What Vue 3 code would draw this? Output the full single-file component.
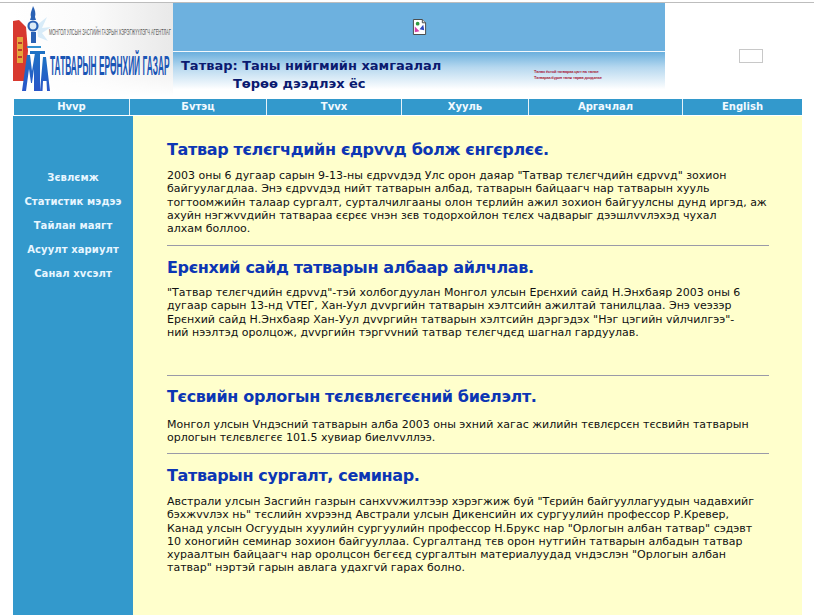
<template>
  <div class="page">
    <header class="top">
      <div class="logo">
        <svg width="160" height="93" viewBox="0 0 160 93">
          <defs>
            <linearGradient id="logoBg" x1="0" y1="0" x2="1" y2="0">
              <stop offset="0" stop-color="#ffffff" />
              <stop offset="0.5" stop-color="#fafafa" />
              <stop offset="1" stop-color="#e9e9e9" />
            </linearGradient>
            <linearGradient id="logoFade" x1="0" y1="0" x2="0" y2="1">
              <stop offset="0" stop-color="#ffffff" stop-opacity="0" />
              <stop offset="1" stop-color="#ffffff" />
            </linearGradient>
            <linearGradient id="mono" x1="0" y1="0" x2="0" y2="1">
              <stop offset="0" stop-color="#1d72c4" />
              <stop offset="1" stop-color="#2a55c8" />
            </linearGradient>
          </defs>
          <rect width="160" height="93" fill="url(#logoBg)" />
          <rect y="55" width="160" height="38" fill="url(#logoFade)" />
          <!-- flag -->
          <path d="M0 18 L6 17 L13 24 L15 48 L12 78 L0 78Z" fill="#d8392f" />
          <path d="M4 34 H10 V60 H4Z" fill="#e6a53c" />
          <path d="M5 40 H9 M5 47 H9 M5 54 H9" stroke="#c0392b" stroke-width="2" />
          <!-- rays -->
          <path d="M24 22 L34 14 L29 25 L38 24 L29 30 L35 38 L25 34Z" fill="#d8ebf8" />
          <!-- soyombo -->
          <path d="M20 3 C22 7 23 10 22 14 L23 17 L17 17 L18 14 C17 10 19 7 20 3Z" fill="#2a62b5" />
          <circle cx="20" cy="23" r="4.5" fill="#dcebf7" stroke="#2a62b5" stroke-width="2.2" />
          <path d="M18 29 H23 V40 H18Z" fill="#2a62b5" />
          <path d="M14 43 H28 V45 H14Z" fill="#2f8fd0" />
          <!-- monogram -->
          <path d="M9 88 L14 52 H17 L19 68 L22 50 H24 V88 H21 V66 L19 80 H18 L16 66 L13 88Z" fill="url(#mono)" />
          <path d="M17 48 H32 V51 H27 V88 H24 V51 H17Z" fill="url(#mono)" />
          <path d="M27 88 L30 54 H33 L37 88 H34 L33.5 78 H30 L29.5 88Z" fill="url(#mono)" />
          <text class="logo-small" transform="translate(36 32) scale(.44 1)">МОНГОЛ УЛСЫН ЗАСГИЙН ГАЗРЫН ХЭРЭГЖҮҮЛЭГЧ АГЕНТЛАГ</text>
          <text class="logo-big" transform="translate(37 72) scale(.298 1)">ТАТВАРЫН ЕРӨНХИЙ ГАЗАР</text>
        </svg>
      </div>
      <div class="banner">
        <div class="banner-top">
          <svg class="broken" width="15" height="16" viewBox="0 0 16 17">
            <path d="M1.5 .5 H11 L14.5 4 V16.5 H1.5Z" fill="#fff" stroke="#444" />
            <path d="M11 .5 V4 H14.5" fill="#ddd" stroke="#444" />
            <circle cx="6" cy="5" r="2" fill="#2c9a3c" />
            <path d="M3 14 L3 8 L8 13Z" fill="#d63fa8" />
            <path d="M8 11 L12 6 L13 12Z" fill="#2c46c0" />
          </svg>
        </div>
        <div class="banner-bottom">
          <div class="slogan">
            <div class="slogan-a">Татвар: Таны нийгмийн хамгаалал</div>
            <div class="slogan-b">Төрөө дээдлэх ёс</div>
          </div>
          <div class="tiny">
            <div>Төлөх ёстой татвараа цагт нь төлье</div>
            <div>Татвараа бүрэн төлж төрөө дээдэлье</div>
          </div>
        </div>
      </div>
      <div class="search"><span class="box"></span></div>
    </header>

    <nav class="menu">
      <a v-for="m in menu" :key="m" class="menu-item">{{ m }}</a>
    </nav>

    <div class="body">
      <aside class="side">
        <a v-for="s in side" :key="s" class="side-item">{{ s }}</a>
      </aside>
      <main class="main">
        <article v-for="(a, i) in articles" :key="a.title" class="article" :class="'a' + i">
          <h2>{{ a.title }}</h2>
          <p>
            <template v-for="l in a.lines" :key="l">{{ l }}<br /></template>
          </p>
        </article>
      </main>
    </div>
  </div>
</template>

<script setup>
const menu = ['Hvvp', 'Бvтэц', 'Tvvx', 'Хууль', 'Аргачлал', 'English']
const side = ['Зєвлємж', 'Статистик мэдээ', 'Тайлан маягт', 'Асуулт хариулт', 'Санал хvсэлт']

const articles = [
  {
    title: 'Татвар тєлєгчдийн єдрvvд болж єнгєрлєє.',
    lines: [
      '2003 оны 6 дугаар сарын 9-13-ны єдрvvдэд Улс орон даяар "Татвар тєлєгчдийн єдрvvд" зохион',
      'байгуулагдлаа. Энэ єдрvvдэд нийт татварын албад, татварын байцаагч нар татварын хууль',
      'тогтоомжийн талаар сургалт, сурталчилгааны олон тєрлийн ажил зохион байгуулсны дунд иргэд, аж',
      'ахуйн нэгжvvдийн татвараа єєрєє vнэн зєв тодорхойлон тєлєх чадварыг дээшлvvлэхэд чухал',
      'алхам боллоо.'
    ]
  },
  {
    title: 'Ерєнхий сайд татварын албаар айлчлав.',
    lines: [
      '"Татвар тєлєгчдийн єдрvvд"-тэй холбогдуулан Монгол улсын Ерєнхий сайд Н.Энхбаяр 2003 оны 6',
      'дугаар сарын 13-нд VТЕГ, Хан-Уул дvvргийн татварын хэлтсийн ажилтай танилцлаа. Энэ vеэзэр',
      'Ерєнхий сайд Н.Энхбаяр Хан-Уул дvvргийн татварын хэлтсийн дэргэдэх "Нэг цэгийн vйлчилгээ"-',
      'ний нээлтэд оролцож, дvvргийн тэргvvний татвар тєлєгчдєд шагнал гардуулав.'
    ]
  },
  {
    title: 'Тєсвийн орлогын тєлєвлєгєєний биелэлт.',
    lines: [
      'Монгол улсын Vндэсний татварын алба 2003 оны эхний хагас жилийн тєвлєрсєн тєсвийн татварын',
      'орлогын тєлєвлєгєє 101.5 хувиар биелvvллээ.'
    ]
  },
  {
    title: 'Татварын сургалт, семинар.',
    lines: [
      'Австрали улсын Засгийн газрын санхvvжилтээр хэрэгжиж буй "Тєрийн байгууллагуудын чадавхийг',
      'бэхжvvлэх нь" тєслийн хvрээнд Австрали улсын Дикенсийн их сургуулийн профессор Р.Кревер,',
      'Канад улсын Осгуудын хуулийн сургуулийн профессор Н.Брукс нар "Орлогын албан татвар" сэдэвт',
      '10 хоногийн семинар зохион байгууллаа. Сургалтанд тєв орон нутгийн татварын албадын татвар',
      'хураалтын байцаагч нар оролцсон бєгєєд сургалтын материалуудад vндэслэн "Орлогын албан',
      'татвар" нэртэй гарын авлага удахгvй гарах болно.'
    ]
  }
]
</script>

<style>
html,
body {
  margin: 0;
  background: #fff;
  overflow: hidden;
}
</style>

<style scoped>
.page {
  width: 814px;
  height: 615px;
  overflow: hidden;
  font-family: 'DejaVu Sans', Verdana, sans-serif;
  box-sizing: border-box;
  padding-top: 2px;
}

.top {
  display: flex;
  height: 93px;
  padding-left: 13px;
  border-top: 1px solid #bdbdbd;
}

.logo {
  width: 160px;
  height: 93px;
}

.logo svg {
  display: block;
}

.logo-small {
  font-family: 'Liberation Sans', sans-serif;
  font-size: 9px;
  fill: #555;
}

.logo-big {
  font-family: 'Liberation Sans', sans-serif;
  font-size: 28px;
  font-weight: bold;
  fill: #1a55b5;
}

.banner {
  width: 492px;
  display: flex;
  flex-direction: column;
}

.banner-top {
  height: 48px;
  background: #6db1df;
  border-bottom: 1px solid #f2f8fc;
  display: flex;
  justify-content: center;
  align-items: center;
}

.banner-bottom {
  height: 44px;
  background: linear-gradient(#6aafdd 0%, #b6d8ef 35%, #ffffff 85%);
  display: flex;
}

.slogan {
  width: 350px;
  padding: 5px 0 0 8px;
  color: #0a1a70;
  font-weight: bold;
  font-size: 13px;
  line-height: 18px;
  box-sizing: border-box;
}

.slogan-b {
  padding-left: 52px;
}

.tiny {
  padding: 17px 0 0 11px;
  font-family: 'Liberation Sans', sans-serif;
  font-size: 4px;
  font-weight: bold;
  letter-spacing: -0.2px;
  line-height: 6px;
  color: #a81a38;
}

.search {
  flex: 1;
  position: relative;
}

.box {
  position: absolute;
  left: 74px;
  top: 46px;
  width: 22px;
  height: 12px;
  border: 1px solid #c8c8c8;
}

.menu {
  display: grid;
  grid-template-columns: 115px 137px 135px 127px 154px 120px;
  margin: 3px 0 1px 14px;
  width: 788px;
  background: #3399cc;
  height: 16px;
}

.menu-item {
  color: #f2faff;
  font-size: 10px;
  font-weight: bold;
  line-height: 16px;
  text-align: center;
  border-left: 1px solid #e6f2f8;
}

.menu-item:first-child {
  border-left: 0;
}

.body {
  display: flex;
  margin: 0 12px 0 13px;
  height: 500px;
}

.side {
  width: 120px;
  background: #3399cc;
  padding-top: 50px;
  box-sizing: border-box;
  display: flex;
  flex-direction: column;
  flex-shrink: 0;
}

.side-item {
  color: #e8f6ff;
  font-size: 10px;
  font-weight: bold;
  letter-spacing: 0.1px;
  height: 24px;
  line-height: 24px;
  text-align: center;
  white-space: nowrap;
}

.main {
  flex: 1;
  background: #ffffcc;
  padding: 24px 33px 0 34px;
}

.article {
  border-bottom: 1px solid #9a9aa8;
  margin: 0;
}

.article:last-child {
  border-bottom: 0;
}

.article h2 {
  margin: 0;
  color: #0c36b4;
  font-size: 16px;
  font-weight: bold;
  letter-spacing: -0.35px;
  line-height: 20px;
  white-space: nowrap;
}

.article p {
  margin: 9px 0 0;
  color: #111;
  font-size: 11px;
  line-height: 13.25px;
  white-space: nowrap;
}

.a0 { height: 105px; }
.a1 { padding-top: 12px; height: 117px; }
.a2 { padding-top: 11px; height: 66px; }
.a3 { padding-top: 12px; }
.a1 p { margin-top: 8px; }
.a2 p { margin-top: 11px; }
.a3 p { margin-top: 9px; }
</style>
